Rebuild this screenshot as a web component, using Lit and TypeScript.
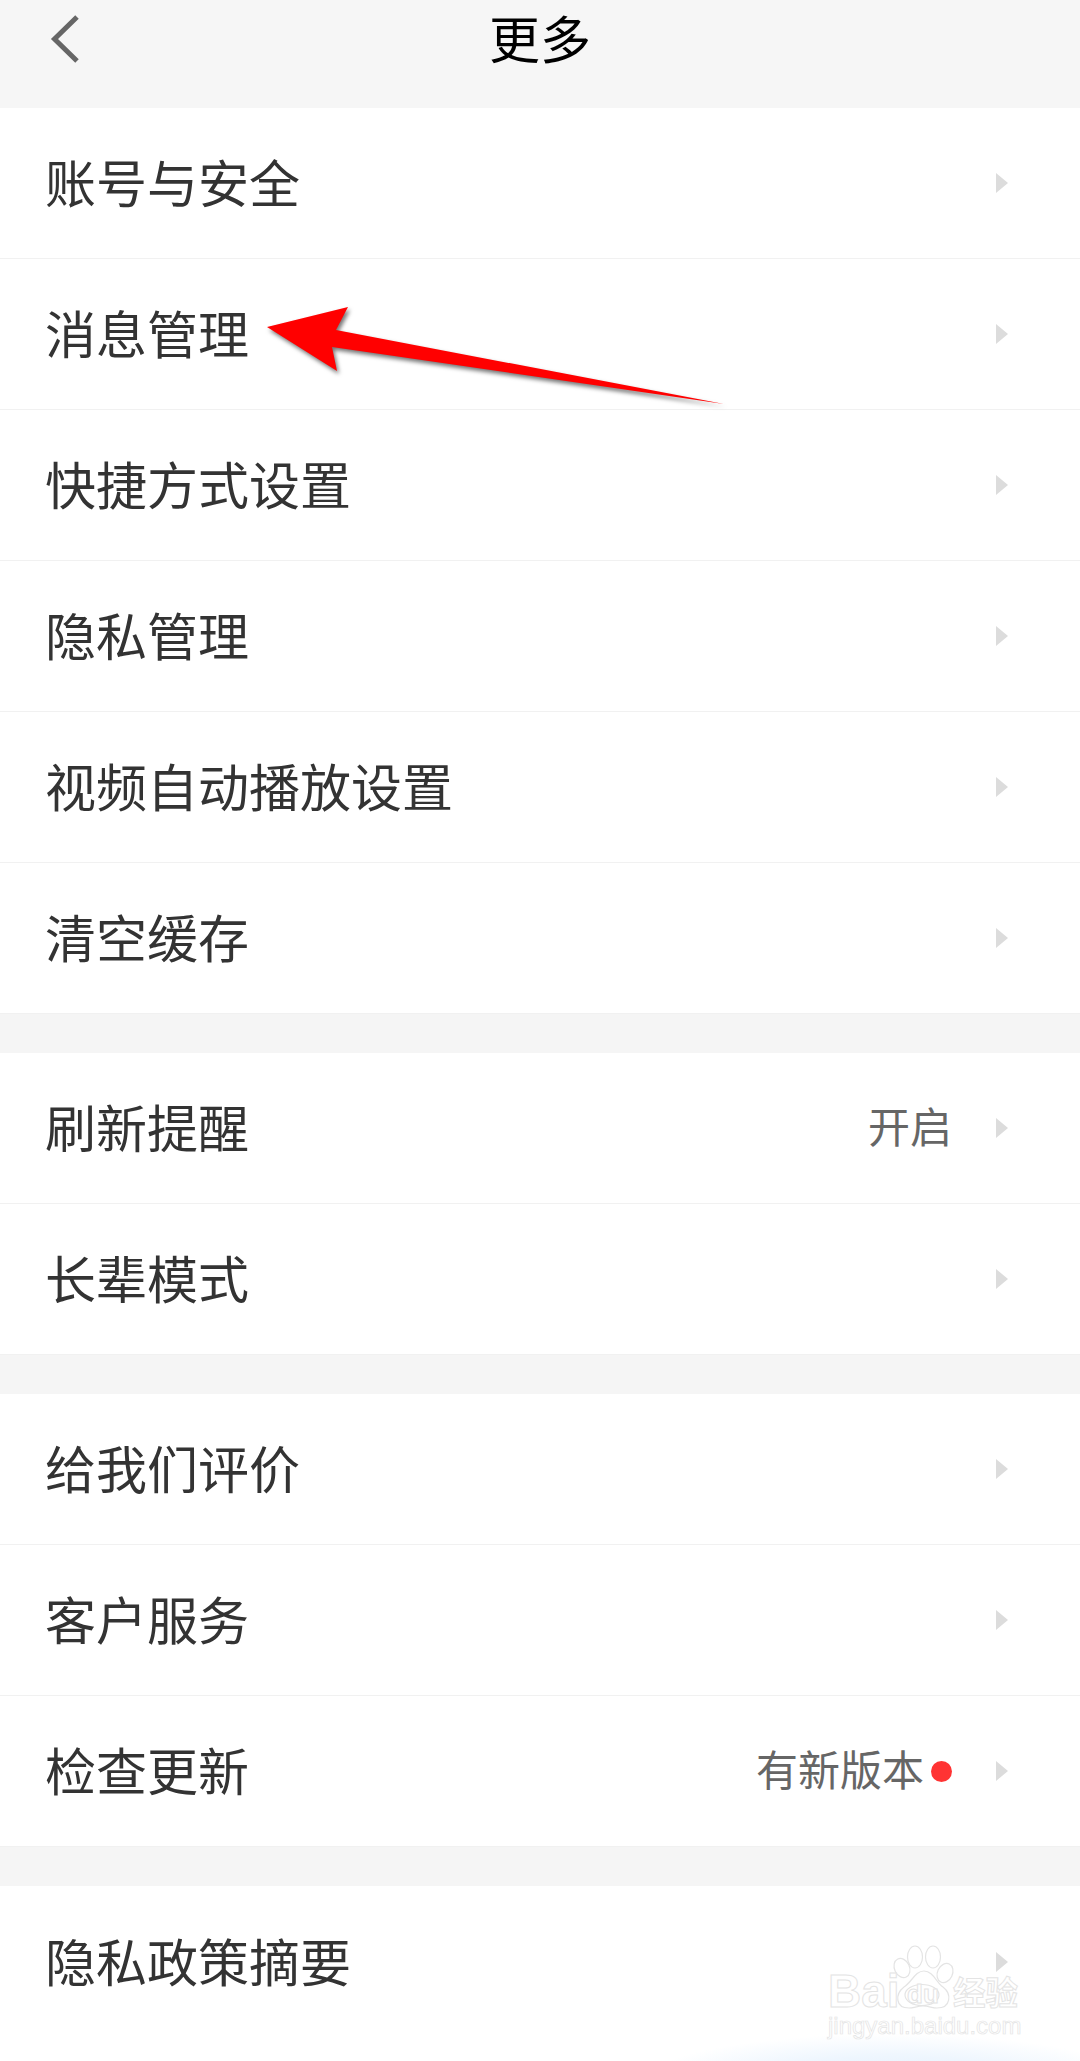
import { LitElement, html, css, svg } from "lit";
import { customElement } from "lit/decorators.js";

type Row = { label: string; value?: string; dot?: boolean };

const SECTIONS: Row[][] = [
  [
    { label: "账号与安全" },
    { label: "消息管理" },
    { label: "快捷方式设置" },
    { label: "隐私管理" },
    { label: "视频自动播放设置" },
    { label: "清空缓存" },
  ],
  [{ label: "刷新提醒", value: "开启" }, { label: "长辈模式" }],
  [
    { label: "给我们评价" },
    { label: "客户服务" },
    { label: "检查更新", value: "有新版本", dot: true },
  ],
  [{ label: "隐私政策摘要" }],
];

@customElement("app-root")
export class AppRoot extends LitElement {
  static styles = css`
    :host {
      display: block;
      position: relative;
      width: 1080px;
      height: 2061px;
      overflow: hidden;
      background: #fff;
      font-family: "Noto Sans CJK SC", "Noto Sans", sans-serif;
    }
    .header {
      height: 108px;
      box-sizing: border-box;
      background: #f6f6f6;
      display: grid;
      grid-template-columns: 1fr auto 1fr;
      align-items: start;
    }
    .back {
      display: block;
      width: 100px;
      height: 80px;
    }
    .title {
      font-size: 51px;
      line-height: 75px;
      color: #000;
    }
    .sections {
      display: flex;
      flex-direction: column;
      gap: 39px;
      background: #f5f5f5;
    }
    .section {
      background: #fff;
    }
    .row {
      height: 151px;
      box-sizing: border-box;
      display: flex;
      align-items: center;
      padding: 0 72px 0 45px;
      border-bottom: 1px solid #f1f1f1;
    }
    .section:last-child .row {
      border-bottom: none;
    }
    .label {
      flex: 1;
      font-size: 51px;
      color: #333;
      line-height: 1;
      margin-bottom: 3px;
    }
    .value {
      font-size: 42px;
      color: #666;
      margin: 0 44px 7px 0;
      line-height: 1;
    }
    .value.with-dot {
      margin-right: 7px;
    }
    .dot {
      width: 21px;
      height: 21px;
      border-radius: 50%;
      background: #ff3333;
      margin-right: 44px;
    }
    .chev {
      width: 12px;
      height: 20px;
      flex: none;
    }
    .footer {
      background: #fff;
      height: 26px;
    }
    .glow {
      position: absolute;
      left: 640px;
      top: 2034px;
      width: 500px;
      height: 100px;
      background: radial-gradient(ellipse closest-side, #e3f0fc 0%, #eef6fe 55%, rgba(255, 255, 255, 0) 100%);
      pointer-events: none;
    }
    .arrow {
      position: absolute;
      left: 0;
      top: 0;
      pointer-events: none;
      filter: drop-shadow(2px 3px 2px rgba(0, 0, 0, 0.55));
    }
    .wm {
      position: absolute;
      left: 820px;
      top: 1940px;
      width: 210px;
      height: 105px;
      pointer-events: none;
      font-family: "Liberation Sans", sans-serif;
    }
    .wm span {
      position: absolute;
      white-space: nowrap;
      color: #fff;
      -webkit-text-stroke: 1px #e4e4e4;
    }
    .wm .bai {
      left: 8px;
      top: 33px;
      font-size: 46px;
      line-height: 36px;
      font-weight: 700;
    }
    .wm .du {
      left: 87px;
      top: 41px;
      font-size: 26px;
      line-height: 26px;
      font-weight: 700;
    }
    .wm .jy {
      left: 133px;
      top: 33px;
      font-size: 32.5px;
      line-height: 36px;
      font-weight: 700;
      font-family: "Noto Sans CJK SC", sans-serif;
    }
    .wm .url {
      left: 8px;
      top: 74px;
      font-size: 24px;
      line-height: 24px;
      -webkit-text-stroke: 0.7px #e4e4e4;
    }
    .paw {
      position: absolute;
      left: 0;
      top: 0;
    }
  `;

  private renderRow(r: Row) {
    return html`<div class="row">
      <div class="label">${r.label}</div>
      ${r.value
        ? html`<div class="value ${r.dot ? "with-dot" : ""}">${r.value}</div>`
        : ""}
      ${r.dot ? html`<div class="dot"></div>` : ""}
      <svg class="chev" viewBox="0 0 12 20"><path d="M0 0L12 10L0 20Z" fill="#dcdcdc" /></svg>
    </div>`;
  }

  render() {
    return html`
      <div class="header">
        <svg class="back" viewBox="0 0 100 80">
          <path d="M77 17L54.5 39L77 61" fill="none" stroke="#666" stroke-width="5" />
        </svg>
        <div class="title">更多</div>
        <div></div>
      </div>
      <div class="sections">
        ${SECTIONS.map(
          (s) => html`<div class="section">${s.map((r) => this.renderRow(r))}</div>`
        )}
      </div>
      <div class="footer"></div>
      <div class="glow"></div>
      <svg class="arrow" width="1080" height="500" viewBox="0 0 1080 500">
        <path d="M267 327L348 307L336 330L724 404L332 347L337 371Z" fill="#ff0000" />
      </svg>
      <div class="wm">
        <svg class="paw" width="210" height="105" viewBox="820 1940 210 105">
          ${svg`<g fill="#fff" stroke="#e4e4e4" stroke-width="1.2">
            <ellipse cx="902" cy="1968" rx="7.5" ry="10" transform="rotate(-25 902 1968)" />
            <ellipse cx="915" cy="1957" rx="7.5" ry="11" />
            <ellipse cx="933" cy="1957" rx="7.5" ry="11" />
            <ellipse cx="945" cy="1973" rx="7.5" ry="10" transform="rotate(25 945 1973)" />
            <path d="M924 1971C933 1971 936 1982 943 1987C952 1994 951 2008 937 2008C932 2008 929 2006 923 2006C917 2006 914 2008 909 2008C895 2008 895 1994 904 1987C912 1982 915 1971 924 1971Z" />
            <ellipse cx="922" cy="1995" rx="17" ry="10.5" />
          </g>`}
        </svg>
        <span class="bai">Bai</span>
        <span class="du">du</span>
        <span class="jy">经验</span>
        <span class="url">jingyan.baidu.com</span>
      </div>
    `;
  }
}
